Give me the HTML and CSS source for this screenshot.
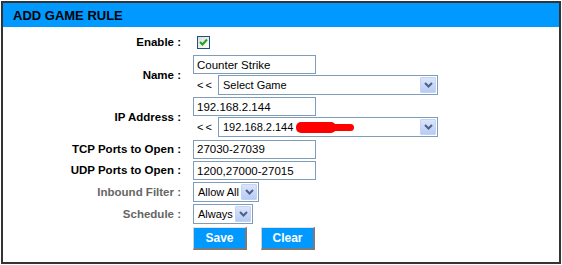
FILE: index.html
```html
<!DOCTYPE html>
<html lang="en">
<head>
  <meta charset="UTF-8">
  <title>Add Game Rule</title>
  <link rel="stylesheet" href="styles.css">
</head>
<body>
  <div class="panel">
    <div class="panel-head">ADD GAME RULE</div>

    <div class="form">
      <div class="row row-enable">
        <label class="lbl">Enable :</label>
        <div class="ctl">
          <span class="check">
            <svg width="9" height="9" viewBox="0 0 9 9"><path d="M1 4 L3.5 6.5 L8 1.5" fill="none" stroke="#21a121" stroke-width="2"/></svg>
          </span>
        </div>
      </div>

      <div class="row">
        <label class="lbl">Name :</label>
        <div class="ctl stack">
          <input class="txt" type="text" value="Counter Strike">
          <div class="pick">
            <span class="back">&lt;&lt;</span>
            <div class="sel sel-wide">
              <span class="sel-text">Select Game</span>
              <span class="arrow"><svg width="9" height="6" viewBox="0 0 9 6"><path d="M1 1 L4.5 4.5 L8 1" fill="none" stroke="#4d6185" stroke-width="2"/></svg></span>
            </div>
          </div>
        </div>
      </div>

      <div class="row">
        <label class="lbl">IP Address :</label>
        <div class="ctl stack">
          <input class="txt" type="text" value="192.168.2.144">
          <div class="pick">
            <span class="back">&lt;&lt;</span>
            <div class="sel sel-wide">
              <span class="sel-text">192.168.2.144 <span class="redact"></span></span>
              <span class="arrow"><svg width="9" height="6" viewBox="0 0 9 6"><path d="M1 1 L4.5 4.5 L8 1" fill="none" stroke="#4d6185" stroke-width="2"/></svg></span>
            </div>
          </div>
        </div>
      </div>

      <div class="row">
        <label class="lbl">TCP Ports to Open :</label>
        <div class="ctl">
          <input class="txt" type="text" value="27030-27039">
        </div>
      </div>

      <div class="row">
        <label class="lbl">UDP Ports to Open :</label>
        <div class="ctl">
          <input class="txt" type="text" value="1200,27000-27015">
        </div>
      </div>

      <div class="row">
        <label class="lbl dim">Inbound Filter :</label>
        <div class="ctl">
          <div class="sel sel-filter">
            <span class="sel-text">Allow All</span>
            <span class="arrow"><svg width="9" height="6" viewBox="0 0 9 6"><path d="M1 1 L4.5 4.5 L8 1" fill="none" stroke="#4d6185" stroke-width="2"/></svg></span>
          </div>
        </div>
      </div>

      <div class="row">
        <label class="lbl dim">Schedule :</label>
        <div class="ctl">
          <div class="sel sel-sched">
            <span class="sel-text">Always</span>
            <span class="arrow"><svg width="9" height="6" viewBox="0 0 9 6"><path d="M1 1 L4.5 4.5 L8 1" fill="none" stroke="#4d6185" stroke-width="2"/></svg></span>
          </div>
        </div>
      </div>

      <div class="row row-buttons">
        <span class="lbl"></span>
        <div class="ctl buttons">
          <button class="btn btn-save">Save</button>
          <button class="btn btn-clear">Clear</button>
        </div>
      </div>
    </div>
  </div>
</body>
</html>
```

FILE: styles.css
```css
body, html {
  margin: 0;
  padding: 0;
  background: #fff;
  font-family: 'Liberation Sans', Arial, sans-serif;
}

.panel {
  margin: 1px;
  width: 556px;
  height: 259px;
  border: 2px solid #333;
  background: #fff;
}

.panel-head {
  height: 24px;
  line-height: 25px;
  padding-left: 10px;
  background: #0099ff;
  color: #000;
  font-weight: bold;
  font-size: 13px;
}

.form {
  padding-top: 8px;
}

.row {
  display: flex;
  align-items: center;
  padding: 1px 0;
}

.row-enable {
  height: 14px;
  padding: 0 0 5px 0;
}

.lbl {
  width: 178px;
  text-align: right;
  font-weight: bold;
  font-size: 11.5px;
  color: #000;
  flex-shrink: 0;
}

.lbl.dim {
  color: #666;
}

.ctl {
  margin-left: 12px;
}

.stack {
  display: flex;
  flex-direction: column;
  gap: 1px;
}

.check {
  width: 11px;
  height: 11px;
  margin-left: 4px;
  border: 1px solid #1c5180;
  background: linear-gradient(135deg, #dcdcd7, #fff);
  display: flex;
  align-items: center;
  justify-content: center;
}

.txt {
  box-sizing: border-box;
  width: 123px;
  height: 19px;
  margin: 0;
  padding: 0 0 0 3px;
  border: 1px solid #7f9db9;
  font-family: 'Liberation Sans', Arial, sans-serif;
  font-size: 11.5px;
  color: #000;
  outline: none;
}

.pick {
  display: flex;
  align-items: center;
}

.back {
  width: 21px;
  padding-left: 4px;
  font-size: 11px;
  letter-spacing: 2px;
}

.sel {
  box-sizing: border-box;
  height: 20px;
  display: flex;
  align-items: center;
  justify-content: space-between;
  border: 1px solid #7f9db9;
  background: #fff;
  padding: 0 1px 0 4px;
  font-size: 11px;
  color: #000;
}

.sel-wide {
  width: 220px;
}

.sel-filter {
  width: 66px;
}

.sel-sched {
  width: 60px;
}

.sel-text {
  white-space: nowrap;
}

.arrow {
  width: 16px;
  height: 16px;
  display: flex;
  align-items: center;
  justify-content: center;
  background: linear-gradient(to bottom, #dbe5fb, #b7cbf4);
  border: 1px solid #c3d3f5;
  box-sizing: border-box;
  border-radius: 1px;
}

/* red scribble over the host name */
.redact {
  position: relative;
  display: inline-block;
  width: 40px;
  height: 11px;
  vertical-align: -2px;
  background: #ff0000;
  border-radius: 5px;
  filter: blur(0.7px);
}

.redact::after {
  content: "";
  position: absolute;
  left: 34px;
  top: 2px;
  width: 24px;
  height: 7px;
  background: #ff0000;
  border-radius: 4px;
}

.row-buttons {
  padding-top: 2px;
}

.buttons {
  display: flex;
  gap: 14px;
}

.btn {
  box-sizing: border-box;
  width: 54px;
  height: 23px;
  margin: 0;
  padding: 0;
  background: #0099ff;
  color: #fff;
  font-family: 'Liberation Sans', Arial, sans-serif;
  font-weight: bold;
  font-size: 12px;
  border-style: solid;
  border-width: 1px 2px 2px 1px;
  border-color: #e4e4e4 #7a7a7a #7a7a7a #cfcfcf;
}
```
